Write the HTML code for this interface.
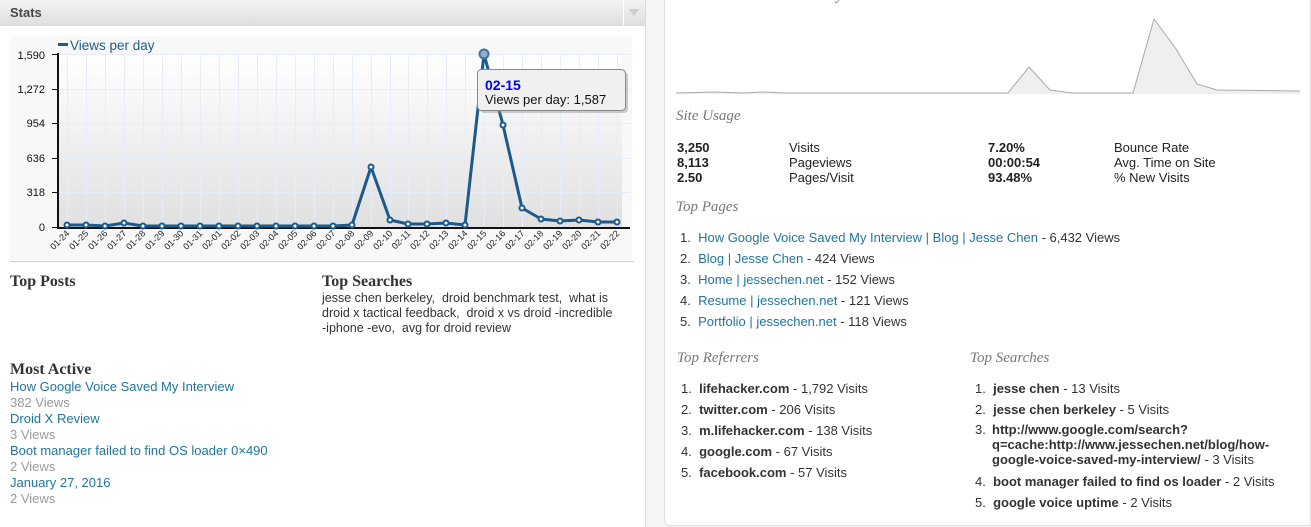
<!DOCTYPE html>
<html><head><meta charset="utf-8"><style>
*{margin:0;padding:0;box-sizing:border-box}
html,body{width:1311px;height:527px;overflow:hidden}
body{background:#f5f5f5;font-family:"Liberation Sans",Tahoma,sans-serif;font-size:13px;color:#333;position:relative}
.a{position:absolute;white-space:nowrap}
a{color:#21759b;text-decoration:none}
.lp{position:absolute;left:0;top:-2px;width:646px;height:529px;background:#fff;border-right:1px solid #dcdcdc}
.hd{position:absolute;left:0;top:0;width:645px;height:26px;background:linear-gradient(#f2f2f2,#dfdfdf);border-bottom:1px solid #dcdcdc}
.rp{position:absolute;left:664px;top:-10px;width:647px;height:536px;background:#fff;border-left:1px solid #dfdfdf;border-right:1px solid #dfdfdf;border-bottom:1px solid #dfdfdf;border-bottom-left-radius:6px}
.h3{font-family:"Liberation Serif",serif;font-weight:bold;font-size:16px;color:#333}
.it{font-family:"Liberation Serif",serif;font-style:italic;font-size:15px;color:#777}
.g{color:#999}
b{color:#333}
</style></head><body>
<div class="lp"></div>
<div class="hd"></div>
<div class="a" style="left:10px;top:5px;font-weight:bold;font-size:13px;color:#464646">Stats</div>
<div class="a" style="left:623px;top:0;width:1px;height:26px;background:#fff"></div>
<div class="a" style="left:629px;top:9px;width:0;height:0;border-left:5px solid transparent;border-right:5px solid transparent;border-top:7px solid #ccc"></div>

<svg class="a" style="left:0;top:0" width="646" height="270">
<defs><linearGradient id="bg" x1="0" y1="0" x2="0" y2="1"><stop offset="0" stop-color="#fff"/><stop offset="1" stop-color="#e0e0e0"/></linearGradient></defs>
<rect x="10" y="36" width="622" height="224" fill="#f8f8f8"/>
<rect x="58" y="54" width="564" height="173" fill="url(#bg)"/>
<g stroke="#e3edfb" stroke-width="1">
<path d="M58 54.5H630M58 89.5H630M58 123.5H630M58 158.5H630M58 192.5H630"/>
<path d="M67.5 54V227M86.5 54V227M105.5 54V227M124.5 54V227M143.5 54V227M162.5 54V227M181.5 54V227M200.5 54V227M219.5 54V227M238.5 54V227M257.5 54V227M276.5 54V227M295.5 54V227M314.5 54V227M333.5 54V227M352.5 54V227M371.5 54V227M390.5 54V227M408.5 54V227M427.5 54V227M446.5 54V227M465.5 54V227M484.5 54V227M503.5 54V227M522.5 54V227M541.5 54V227M560.5 54V227M579.5 54V227M598.5 54V227M617.5 54V227"/>
</g>
<path d="M58 53V228H630" fill="none" stroke="#111" stroke-width="2"/>
<path d="M52 54.5H58M52 89.5H58M52 123.5H58M52 158.5H58M52 192.5H58M52 227.5H58" stroke="#111"/>
<g font-family="Liberation Sans,sans-serif" font-size="11" fill="#111" text-anchor="end">
<text x="45" y="59">1,590</text><text x="45" y="93">1,272</text><text x="45" y="127">954</text><text x="45" y="162">636</text><text x="45" y="196">318</text><text x="45" y="231">0</text>
</g>
<rect x="58" y="43" width="10" height="3" fill="#1f5c8c"/>
<text x="70" y="50" font-family="Liberation Sans,sans-serif" font-size="13.5" fill="#1f5c8c">Views per day</text>
<polyline fill="none" stroke="#1b5a8a" stroke-width="3" stroke-linejoin="round" points="67,225 86,225 105,226 124,223 143,226 162,226 181,226 200,226 219,226 238,226 257,226 276,226 295,226 314,226 333,226 352,225 371,167 390,220 408,224 427,224 446,223 465,225 484,54 503,125 522,208 541,219 560,221 579,220 598,222 617,222"/>
<g fill="#fff" stroke="#1b5a8a" stroke-width="2">
<circle cx="67" cy="225" r="2.5"/><circle cx="86" cy="225" r="2.5"/><circle cx="105" cy="226" r="2.5"/><circle cx="124" cy="223" r="2.5"/><circle cx="143" cy="226" r="2.5"/><circle cx="162" cy="226" r="2.5"/><circle cx="181" cy="226" r="2.5"/><circle cx="200" cy="226" r="2.5"/><circle cx="219" cy="226" r="2.5"/><circle cx="238" cy="226" r="2.5"/><circle cx="257" cy="226" r="2.5"/><circle cx="276" cy="226" r="2.5"/><circle cx="295" cy="226" r="2.5"/><circle cx="314" cy="226" r="2.5"/><circle cx="333" cy="226" r="2.5"/><circle cx="352" cy="225" r="2.5"/><circle cx="371" cy="167" r="2.5"/><circle cx="390" cy="220" r="2.5"/><circle cx="408" cy="224" r="2.5"/><circle cx="427" cy="224" r="2.5"/><circle cx="446" cy="223" r="2.5"/><circle cx="465" cy="225" r="2.5"/><circle cx="503" cy="125" r="2.5"/><circle cx="522" cy="208" r="2.5"/><circle cx="541" cy="219" r="2.5"/><circle cx="560" cy="221" r="2.5"/><circle cx="579" cy="220" r="2.5"/><circle cx="598" cy="222" r="2.5"/><circle cx="617" cy="222" r="2.5"/>
</g>
<circle cx="484" cy="54" r="4.5" fill="#8fb0cc" stroke="#3e739e" stroke-width="2"/>
<g font-family="Liberation Sans,sans-serif" font-size="9" fill="#222" text-anchor="end">
<text transform="translate(70,234) rotate(-45)">01-24</text><text transform="translate(89,234) rotate(-45)">01-25</text><text transform="translate(108,234) rotate(-45)">01-26</text><text transform="translate(127,234) rotate(-45)">01-27</text><text transform="translate(146,234) rotate(-45)">01-28</text><text transform="translate(165,234) rotate(-45)">01-29</text><text transform="translate(184,234) rotate(-45)">01-30</text><text transform="translate(203,234) rotate(-45)">01-31</text><text transform="translate(222,234) rotate(-45)">02-01</text><text transform="translate(241,234) rotate(-45)">02-02</text><text transform="translate(260,234) rotate(-45)">02-03</text><text transform="translate(279,234) rotate(-45)">02-04</text><text transform="translate(298,234) rotate(-45)">02-05</text><text transform="translate(317,234) rotate(-45)">02-06</text><text transform="translate(336,234) rotate(-45)">02-07</text><text transform="translate(355,234) rotate(-45)">02-08</text><text transform="translate(374,234) rotate(-45)">02-09</text><text transform="translate(393,234) rotate(-45)">02-10</text><text transform="translate(411,234) rotate(-45)">02-11</text><text transform="translate(430,234) rotate(-45)">02-12</text><text transform="translate(449,234) rotate(-45)">02-13</text><text transform="translate(468,234) rotate(-45)">02-14</text><text transform="translate(487,234) rotate(-45)">02-15</text><text transform="translate(506,234) rotate(-45)">02-16</text><text transform="translate(525,234) rotate(-45)">02-17</text><text transform="translate(544,234) rotate(-45)">02-18</text><text transform="translate(563,234) rotate(-45)">02-19</text><text transform="translate(582,234) rotate(-45)">02-20</text><text transform="translate(601,234) rotate(-45)">02-21</text><text transform="translate(620,234) rotate(-45)">02-22</text>
</g>
<rect x="480" y="72" width="148" height="41" rx="4" fill="#999" opacity=".5"/>
<rect x="477.5" y="69.5" width="148" height="41" rx="4" fill="#f0f0f0" stroke="#888"/>
<text x="485" y="90" font-family="Liberation Sans,sans-serif" font-size="14" font-weight="bold" fill="#0000ee">02-15</text>
<text x="485" y="104" font-family="Liberation Sans,sans-serif" font-size="13" fill="#111">Views per day: 1,587</text>
<rect x="10" y="261" width="624" height="1" fill="#ccc"/>
<rect x="10" y="349" width="312" height="1" fill="#ccc"/>
</svg>

<div class="a h3" style="left:10px;top:273px">Top Posts</div>
<div class="a h3" style="left:322px;top:273px">Top Searches</div>
<div class="a" style="left:322px;top:291px;line-height:15px;font-size:12.5px">jesse chen berkeley,&nbsp; droid benchmark test,&nbsp; what is<br>droid x tactical feedback,&nbsp; droid x vs droid -incredible<br>-iphone -evo,&nbsp; avg for droid review</div>
<div class="a h3" style="left:10px;top:361px">Most Active</div>
<div class="a" style="left:10px;top:379px;line-height:16px">
<a>How Google Voice Saved My Interview</a><br><span class="g">382 Views</span><br><a>Droid X Review</a><br><span class="g">3 Views</span><br><a>Boot manager failed to find OS loader 0×490</a><br><span class="g">2 Views</span><br><a>January 27, 2016</a><br><span class="g">2 Views</span>
</div>

<div class="rp"></div>
<div class="a it" style="left:677px;top:-12px">Visits Over the Past 30 Days</div>
<svg class="a" style="left:664px;top:0" width="646" height="100">
<polygon points="12,93 50,92 80,93 100,92 120,93 344,93 365,67 386,90 408,93 469,93 490,19 512,49 533,84 553,90 636,91 636,94 12,94" fill="#efefef"/>
<polyline points="12,93 50,92 80,93 100,92 120,93 344,93 365,67 386,90 408,93 469,93 490,19 512,49 533,84 553,90 636,91" fill="none" stroke="#aaa" stroke-width="1"/>
</svg>
<div class="a it" style="left:676px;top:108px">Site Usage</div>
<div class="a" style="left:677px;top:140px;line-height:15px;font-weight:bold;color:#222">3,250<br>8,113<br>2.50</div>
<div class="a" style="left:789px;top:140px;line-height:15px;color:#222">Visits<br>Pageviews<br>Pages/Visit</div>
<div class="a" style="left:988px;top:140px;line-height:15px;font-weight:bold;color:#222">7.20%<br>00:00:54<br>93.48%</div>
<div class="a" style="left:1114px;top:140px;line-height:15px;color:#222">Bounce Rate<br>Avg. Time on Site<br>% New Visits</div>
<div class="a it" style="left:676px;top:199px">Top Pages</div>
<div class="a" style="left:680px;top:227px;line-height:21px">
1.&nbsp; <a>How Google Voice Saved My Interview | Blog | Jesse Chen</a> - 6,432 Views<br>
2.&nbsp; <a>Blog | Jesse Chen</a> - 424 Views<br>
3.&nbsp; <a>Home | jessechen.net</a> - 152 Views<br>
4.&nbsp; <a>Resume | jessechen.net</a> - 121 Views<br>
5.&nbsp; <a>Portfolio | jessechen.net</a> - 118 Views</div>
<div class="a it" style="left:677px;top:350px">Top Referrers</div>
<div class="a it" style="left:970px;top:350px">Top Searches</div>
<div class="a" style="left:681px;top:378px;line-height:21px">
1.&nbsp; <b>lifehacker.com</b> - 1,792 Visits<br>
2.&nbsp; <b>twitter.com</b> - 206 Visits<br>
3.&nbsp; <b>m.lifehacker.com</b> - 138 Visits<br>
4.&nbsp; <b>google.com</b> - 67 Visits<br>
5.&nbsp; <b>facebook.com</b> - 57 Visits</div>
<div class="a" style="left:975px;top:378px;line-height:21px">1.&nbsp; <b>jesse chen</b> - 13 Visits<br>2.&nbsp; <b>jesse chen berkeley</b> - 5 Visits</div>
<div class="a" style="left:975px;top:422px;line-height:15px">3.</div>
<div class="a" style="left:992px;top:422px;line-height:15px"><b>http://www.google.com/search?</b><br><b>q=cache:http://www.jessechen.net/blog/how-</b><br><b>google-voice-saved-my-interview/</b> - 3 Visits</div>
<div class="a" style="left:975px;top:471px;line-height:21px">4.&nbsp; <b>boot manager failed to find os loader</b> - 2 Visits<br>5.&nbsp; <b>google voice uptime</b> - 2 Visits</div>
</body></html>
